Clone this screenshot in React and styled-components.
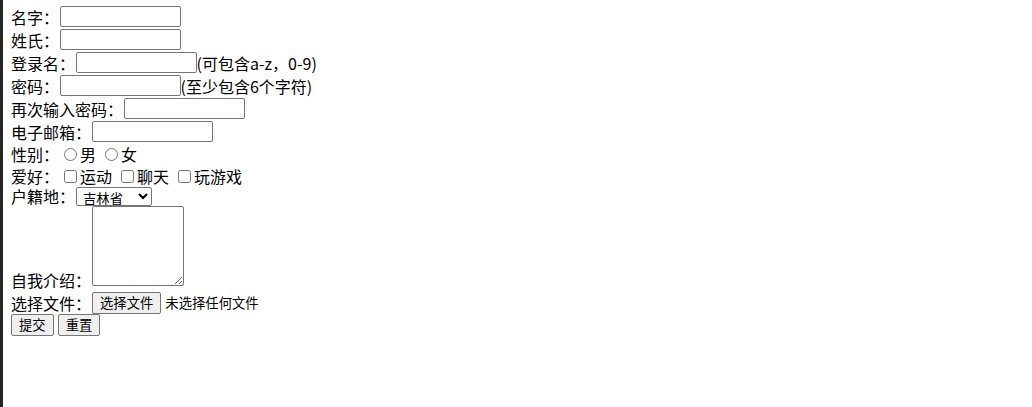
import styled, { createGlobalStyle } from "styled-components";

const GlobalStyle = createGlobalStyle`
  html, body {
    margin: 0;
    background: #fff;
  }
  body {
    font-family: "Noto Sans CJK SC", "Microsoft YaHei", sans-serif;
    font-size: 16px;
    color: #000;
  }
`;

const Page = styled.div`
  display: flex;
  min-height: 407px;
`;

const Edge = styled.div`
  width: 3px;
  background: #262626;
  flex-shrink: 0;
`;

const Form = styled.form`
  display: flex;
  flex-direction: column;
  padding: 5px 8px 0 8px;
`;

const Row = styled.div`
  display: flex;
  align-items: ${(p) => p.$align || "center"};
  height: ${(p) => p.$h || 23}px;
  white-space: nowrap;
`;

const Label = styled.span`
  line-height: 20px;
  align-self: ${(p) => p.$self || "auto"};
  margin-bottom: ${(p) => p.$low || 0}px;
`;

const TextInput = styled.input`
  box-sizing: border-box;
  width: 121px;
  height: 21px;
  margin: 0 0 0 0.5px;
  padding: 1px 2px;
  border: 1px solid #767676;
  border-radius: 2px;
  font-family: inherit;
  font-size: 13.33px;
`;

const Hint = styled.span`
  line-height: 20px;
`;

const Choice = styled.label`
  display: flex;
  align-items: center;
  margin-right: 4px;
  line-height: 20px;
`;

const Mark = styled.input`
  width: 13px;
  height: 13px;
  margin: 1px 3px 0 5px;
`;

const Select = styled.select`
  box-sizing: border-box;
  width: 76px;
  height: 19px;
  margin-left: 1px;
  padding: 0 2px;
  border: 1px solid #767676;
  border-radius: 2px;
  background: #fff;
  font-family: inherit;
  font-size: 13.33px;
  color: #000;
`;

const TextArea = styled.textarea`
  box-sizing: border-box;
  width: 92px;
  height: 80px;
  margin: 0 0 0 0.5px;
  padding: 2px;
  border: 1px solid #767676;
  border-radius: 2px;
  font-family: inherit;
  font-size: 13.33px;
  align-self: flex-start;
`;

const Button = styled.button`
  box-sizing: border-box;
  height: 22px;
  margin: 0 ${(p) => p.$gap || 0}px 0 ${(p) => p.$left || 0}px;
  padding: 0 7px;
  border: 1px solid #767676;
  border-radius: 2px;
  background: #efefef;
  font-family: inherit;
  font-size: 13.33px;
  color: #000;
  line-height: 18px;
`;

const FileNote = styled.span`
  margin-left: 4px;
  font-size: 13.33px;
  line-height: 18px;
`;

export default function App() {
  return (
    <>
      <GlobalStyle />
      <Page>
        <Edge />
        <Form>
          <Row>
            <Label>名字：</Label>
            <TextInput type="text" />
          </Row>
          <Row>
            <Label>姓氏：</Label>
            <TextInput type="text" />
          </Row>
          <Row>
            <Label>登录名：</Label>
            <TextInput type="text" />
            <Hint>(可包含a-z，0-9)</Hint>
          </Row>
          <Row>
            <Label>密码：</Label>
            <TextInput type="password" />
            <Hint>(至少包含6个字符)</Hint>
          </Row>
          <Row>
            <Label>再次输入密码：</Label>
            <TextInput type="password" />
          </Row>
          <Row>
            <Label>电子邮箱：</Label>
            <TextInput type="email" />
          </Row>
          <Row $h={22}>
            <Label>性别：</Label>
            <Choice>
              <Mark type="radio" name="sex" />男
            </Choice>
            <Choice>
              <Mark type="radio" name="sex" />女
            </Choice>
          </Row>
          <Row $h={21}>
            <Label>爱好：</Label>
            <Choice>
              <Mark type="checkbox" />运动
            </Choice>
            <Choice>
              <Mark type="checkbox" />聊天
            </Choice>
            <Choice>
              <Mark type="checkbox" />玩游戏
            </Choice>
          </Row>
          <Row $h={20}>
            <Label>户籍地：</Label>
            <Select defaultValue="jl">
              <option value="jl">吉林省</option>
              <option value="ln">辽宁省</option>
              <option value="hlj">黑龙江省</option>
            </Select>
          </Row>
          <Row $h={86} $align="flex-end">
            <Label $self="flex-end" $low={2}>自我介绍：</Label>
            <TextArea />
          </Row>
          <Row $h={22}>
            <Label>选择文件：</Label>
            <Button type="button" $left={1}>选择文件</Button>
            <FileNote>未选择任何文件</FileNote>
          </Row>
          <Row $h={22}>
            <Button type="submit" $gap={4}>提交</Button>
            <Button type="reset">重置</Button>
          </Row>
        </Form>
      </Page>
    </>
  );
}
